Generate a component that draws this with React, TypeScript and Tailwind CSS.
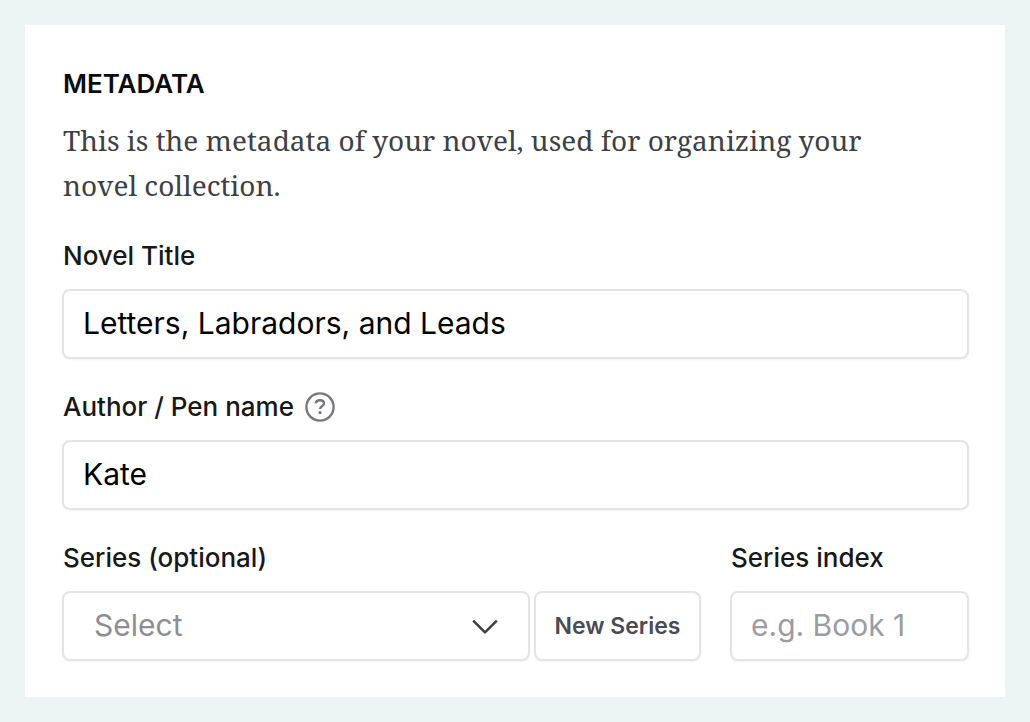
import React from 'react';

const labelClass = 'block pl-px text-[26px] leading-[30px] font-medium text-[#18181b]';
const boxClass = 'block h-[70px] rounded-lg border-2 border-[#e4e4e7] bg-white shadow-xs';
const fieldClass = `${boxClass} w-full px-[19px] pb-0.5 text-[30px] text-black outline-none placeholder:text-[#9c9ca3]`;

const HelpIcon: React.FC = () => (
  <svg width="30" height="30" viewBox="0 0 30 30" fill="none" stroke="currentColor" aria-hidden="true">
    <circle cx="15" cy="15" r="13.6" strokeWidth="2.4" />
    <path d="M10.7 11.4c.3-2 2-3.1 4.2-3.1 2.4 0 4.1 1.2 4.1 3.1 0 2.6-3.9 2.6-3.9 5.6" strokeWidth="2.4" />
    <circle cx="15" cy="20.6" r="1.6" fill="currentColor" stroke="none" />
  </svg>
);

const Chevron: React.FC = () => (
  <svg
    width="26"
    height="16"
    viewBox="0 0 26 16"
    fill="none"
    stroke="currentColor"
    strokeWidth="2.5"
    strokeLinejoin="round"
    className="pointer-events-none absolute top-7 right-8 text-[#3f3f46]"
    aria-hidden="true"
  >
    <path d="M1.2 1.6L13 13.4L24.8 1.6" />
  </svg>
);

const App: React.FC = () => {
  return (
    <main className="min-h-screen bg-[#edf4f4] p-[25px] font-['Inter',sans-serif]">
      <form className="bg-white pt-[42px] pr-9 pb-9 pl-[37px]">
        <h2 className="pl-px text-[26px] leading-[34px] font-semibold text-[#0c0c0e]">METADATA</h2>
        <p className="mt-[17px] max-w-[860px] pl-px font-['Noto_Serif','Liberation_Serif',serif] text-[28px] leading-[45px] text-[#3f3f46]">
          This is the metadata of your novel, used for organizing your novel collection.
        </p>

        <div className="mt-[33px]">
          <label htmlFor="title" className={labelClass}>Novel Title</label>
          <input id="title" type="text" defaultValue="Letters, Labradors, and Leads" className={`mt-[18px] ${fieldClass}`} />
        </div>

        <div className="mt-[33px]">
          <div className="flex items-center gap-[11px]">
            <label htmlFor="author" className={labelClass}>Author / Pen name</label>
            <button type="button" aria-label="About pen names" className="text-[#77777c]">
              <HelpIcon />
            </button>
          </div>
          <input id="author" type="text" defaultValue="Kate" className={`mt-[18px] ${fieldClass}`} />
        </div>

        <div className="mt-[33px] flex gap-[29px]">
          <div className="flex-1">
            <label htmlFor="series" className={labelClass}>Series (optional)</label>
            <div className="mt-[18px] flex gap-1">
              <div className="relative flex-1">
                <select
                  id="series"
                  defaultValue=""
                  className={`${boxClass} w-full appearance-none pr-16 pb-0.5 pl-[30px] text-[30px] text-[#8e8e90] outline-none`}
                >
                  <option value="">Select</option>
                </select>
                <Chevron />
              </div>
              <button type="button" className={`${boxClass} w-[167px] text-[23px] font-semibold text-[#4b4b55]`}>
                New Series
              </button>
            </div>
          </div>
          <div className="w-[239px]">
            <label htmlFor="index" className={labelClass}>Series index</label>
            <input id="index" type="text" placeholder="e.g. Book 1" className={`mt-[18px] ${fieldClass}`} />
          </div>
        </div>
      </form>
    </main>
  );
};

export default App;
